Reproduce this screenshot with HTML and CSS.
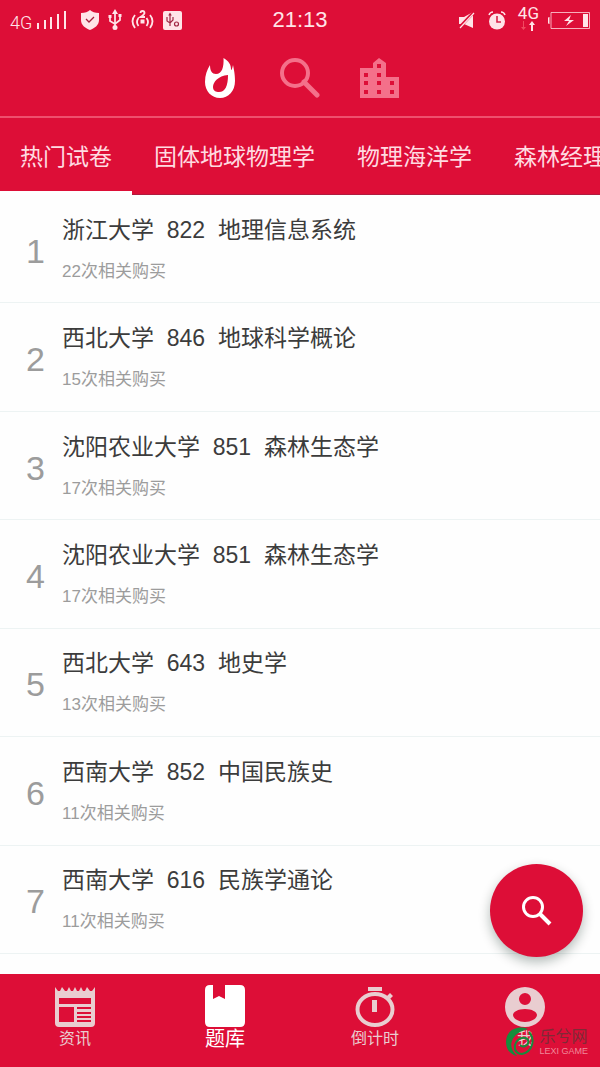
FILE: index.html
```
<!DOCTYPE html>
<html lang="zh-CN">
<head>
<meta charset="utf-8">
<meta name="viewport" content="width=device-width, initial-scale=1">
<title>题库</title>
<link rel="stylesheet" href="styles.css">
</head>
<body>
<div class="app">
  <header class="header">
    <div class="status">
      <div class="status-side">
        <span class="network">4G</span>
        <svg class="signal" width="32" height="20" viewBox="0 0 32 20" fill="currentColor"><path d="M1 13h2v6H1zM8 10h2v9H8zM14 7h2v12h-2zM21 4h2v15h-2zM28 1h2v18h-2z"/></svg>
        <svg class="shield" width="18" height="20" viewBox="0 0 18 20"><path fill="currentColor" d="M9 0c2 2 5 3 9 3v7c0 5-4 8-9 10-5-2-9-5-9-10V3c4 0 7-1 9-3z"/><path d="m5 9 3 3 5-5" fill="none" stroke="#a51d3c" stroke-width="1.3"/></svg>
        <svg class="usb" width="14" height="22" viewBox="0 0 14 22" fill="none" stroke="currentColor" stroke-width="1.7"><path d="M7 3v15M2 8v4l5 3 5-4V7"/><path fill="currentColor" stroke="none" d="m7 0 3 5H4zM.5 6h3v3h-3zM10.500 5h3v3h-3z"/><circle cx="7" cy="18.500" r="2.500" fill="currentColor" stroke="none"/></svg>
        <svg class="waves" width="23" height="20" viewBox="0 0 23 20" fill="none" stroke="currentColor" stroke-width="1.800"><path d="M4 5q-5 6 0 13M7.500 8q-3 4 0 8M19 5q5 6 0 13M15.500 8q3 4 0 8M9.500 3q0-2 2-2t2 2q0 1.500-4 4h4.500"/><path d="M9.500 9.500h4v4h-4z" fill="currentColor" stroke="none"/></svg>
        <svg class="debug" width="19" height="19" viewBox="0 0 19 19"><rect width="19" height="19" rx="2" fill="currentColor"/><g fill="none" stroke="#a02643" stroke-width="1.200"><path d="M7 3v12M4 6v4l3 2 3-3V6"/><circle cx="13.500" cy="13" r="2"/></g><path d="m7 1.500 1.800 3H5.200z" fill="#a02643"/></svg>
      </div>
      <time class="clock">21:13</time>
      <div class="status-side status-right">
        <svg class="mute" width="18" height="18" viewBox="0 0 18 18"><path fill="currentColor" d="M1 6h5l9-5v16l-9-4H1z"/><path d="M1 17 16 1" stroke="#dd0f38" stroke-width="3"/><path d="M2 17 16 2" stroke="currentColor" stroke-width="1.200"/></svg>
        <svg class="alarm" width="18" height="19" viewBox="0 0 18 19"><circle cx="9" cy="10.500" r="8" fill="currentColor"/><path d="M1 4q1-3 4-3M17 4q-1-3-4-3" fill="none" stroke="currentColor" stroke-width="1.500"/><path d="M9 5v6h4" fill="none" stroke="#d92148" stroke-width="1.600"/></svg>
        <span class="data"><span>4G</span><svg width="16" height="10" viewBox="0 0 16 10"><path d="M3 0h1v6h2L3.500 9 1 6h2z" fill="#f04a60"/><path d="M12 0 9 4h2v6h2V4h2z" fill="currentColor"/></svg></span>
        <svg class="battery" width="43" height="17" viewBox="0 0 43 17"><path d="M1 6q0-1 1.500-1v7Q1 12 1 11z" fill="currentColor"/><path d="M4 .500h38.500v16H4z" fill="none" stroke="currentColor" stroke-opacity=".75"/><path d="m24 3-7 6h5l-3 5 8-6h-5zM36 2h5v13h-5z" fill="currentColor"/></svg>
      </div>
    </div>
    <nav class="modes" aria-label="浏览方式">
      <button class="mode mode-active" aria-label="热门"><svg width="40" height="44" viewBox="0 0 40 44"><path fill="currentColor" fill-rule="evenodd" d="M23.500 2C29 5 31 9 31 13c0 2 1 1 2-4 1 5 2 9 2 16 0 10-6.500 17-15 17S5 35 5 26c0-7 2-12 5-17 0 6 2 9 6 9 6 0 8-7 7.500-16zM28 19c-10 1-15 7-15 12 0 4 3 5 6 5 6 0 9-6 9-17z"/></svg></button>
      <button class="mode" aria-label="搜索"><svg width="40" height="44" viewBox="0 0 40 44" fill="none" stroke="currentColor"><circle cx="15" cy="17" r="13" stroke-width="4"/><path d="m24 26 13 13" stroke-width="5" stroke-linecap="round"/></svg></button>
      <button class="mode" aria-label="院校"><svg width="40" height="44" viewBox="0 0 40 44"><path fill="currentColor" fill-rule="evenodd" d="M0 12h13V7l6-5 7 5v14h13v21H0zM4 17v4h4v-4zm0 8v4h4v-4zm0 9v4h4v-4zM17 8v4h4V8zm0 9v4h4v-4zm0 8v4h4v-4zm0 9v4h4v-4zm13-9v4h4v-4zm0 9v4h4v-4z"/></svg></button>
    </nav>
  </header>
  <nav class="tabs" aria-label="试卷分类">
    <button class="tab tab-active">热门试卷</button>
    <button class="tab">固体地球物理学</button>
    <button class="tab">物理海洋学</button>
    <button class="tab">森林经理学</button>
  </nav>
  <main class="content">
    <ol class="papers">
      <li class="paper"><span class="rank">1</span><div class="info"><h2 class="name">浙江大学  822  地理信息系统</h2><p class="sales">22次相关购买</p></div></li>
      <li class="paper"><span class="rank">2</span><div class="info"><h2 class="name">西北大学  846  地球科学概论</h2><p class="sales">15次相关购买</p></div></li>
      <li class="paper"><span class="rank">3</span><div class="info"><h2 class="name">沈阳农业大学  851  森林生态学</h2><p class="sales">17次相关购买</p></div></li>
      <li class="paper"><span class="rank">4</span><div class="info"><h2 class="name">沈阳农业大学  851  森林生态学</h2><p class="sales">17次相关购买</p></div></li>
      <li class="paper"><span class="rank">5</span><div class="info"><h2 class="name">西北大学  643  地史学</h2><p class="sales">13次相关购买</p></div></li>
      <li class="paper"><span class="rank">6</span><div class="info"><h2 class="name">西南大学  852  中国民族史</h2><p class="sales">11次相关购买</p></div></li>
      <li class="paper"><span class="rank">7</span><div class="info"><h2 class="name">西南大学  616  民族学通论</h2><p class="sales">11次相关购买</p></div></li>
    </ol>
    <button class="fab" aria-label="搜索试卷"><svg width="30" height="30" viewBox="0 0 30 30" fill="none" stroke="currentColor"><circle cx="11" cy="11" r="9.500" stroke-width="3"/><path d="m18 18 10 10" stroke-width="4"/></svg></button>
  </main>
  <nav class="bottom" aria-label="主导航">
    <button class="item"><svg width="40" height="40" viewBox="0 0 40 40"><path fill="currentColor" fill-rule="evenodd" d="M0 0 3 4h2l2-4 3 4h2l2-4 2 4h2l2-4 2 4h2l2-4 2 4h2l2-4 3 4h2l3-4v36q0 4-4 4H4q-4 0-4-4zM4 11v6h32v-6zm0 9v15h15V20zm18 0v2h14v-2zm0 5v2h14v-2zm0 4v2h14v-2zm0 4v2h14v-2z"/></svg><span>资讯</span></button>
    <button class="item item-active"><svg width="40" height="42" viewBox="0 0 40 42"><path fill="currentColor" d="M5 0h3v14l6-3 6 3V0h15q5 0 5 5v32q0 5-5 5H5q-5 0-5-5V5q0-5 5-5z"/></svg><span>题库</span></button>
    <button class="item"><svg width="40" height="40" viewBox="0 0 40 40"><path fill="currentColor" d="M13 0h14v4H13zM17 13h5v12h-5zM31 10l4-4 3 3-4 4z"/><ellipse cx="20" cy="22.500" rx="17.500" ry="15.500" fill="none" stroke="currentColor" stroke-width="4"/></svg><span>倒计时</span></button>
    <button class="item"><svg width="40" height="40" viewBox="0 0 40 40"><path fill="currentColor" fill-rule="evenodd" d="M20 0a20 20 0 1 1 0 40 20 20 0 0 1 0-40zm0 6a6 6 0 1 0 0 12 6 6 0 0 0 0-12zm0 16C13 22 8 25 8 28s5 7 12 7 12-4 12-7-5-6-12-6z"/></svg><span>我</span></button>
    <div class="brand">
      <svg width="30" height="30" viewBox="0 0 30 30" fill="none" stroke="#168c3c"><path fill="#168c3c" stroke="none" d="M23 2C14-2 1 2 1 15c0 8 5 13 11 14-5-5-7-10-5-15C9 8 15 4 23 2z"/><path d="M24 5c7 8 3 20-7 22-5 0-8-4-7-9 1-4 5-8 10-7 5 1 4 7 0 8-2 1-4 0-5-1" stroke-width="2"/></svg>
      <div class="brand-text"><span class="brand-name">乐兮网</span><span class="brand-sub">LEXI GAME</span></div>
    </div>
  </nav>
</div>
</body>
</html>
```
FILE: styles.css
```
:root {
  --red: #dd0e37;
  --text: #3c3c3c;
  --muted: #9c9c9c;
}

* { box-sizing: border-box; }

body {
  margin: 0;
  background: #fefefe;
  color: var(--text);
  font-family: "Liberation Sans", "Noto Sans CJK SC", sans-serif;
}

button {
  padding: 0;
  border: 0;
  background: none;
  color: inherit;
  font: inherit;
  cursor: pointer;
}

svg { display: block; flex: none; }

.app {
  display: flex;
  flex-direction: column;
  min-height: 100vh;
}

.header {
  flex: none;
  background: var(--red);
  color: #fff;
  border-bottom: 2px solid #ee506d;
}

.status {
  display: grid;
  grid-template-columns: 1fr auto 1fr;
  align-items: center;
  height: 40px;
  padding: 0 10px;
  color: #ffe4e8;
}

.status-side { display: flex; align-items: center; }
.status-right { justify-content: flex-end; gap: 12px; }
.network { font: 300 18px/24px Roboto, sans-serif; padding-top: 5px; }
.signal { margin: 0 13px 0 4px; }
.usb { margin: 0 9px; }
.waves { margin-right: 9px; }
.clock { font-size: 22px; line-height: 40px; }

.data {
  display: flex;
  flex-direction: column;
  align-items: center;
  font: 17px/16px Roboto, sans-serif;
  padding-bottom: 4px;
}

.battery { margin-left: -4px; }

.modes {
  display: flex;
  justify-content: center;
  gap: 40px;
  padding: 16px 0;
}

.mode { color: #f4708a; }
.mode-active { color: #fff; }

.tabs {
  display: flex;
  flex: none;
  gap: 2px;
  height: 77px;
  overflow: hidden;
  background: var(--red);
  color: #ffdbe1;
  box-shadow: inset 0 -1px #b01b3e;
}

.tab {
  flex: none;
  padding: 4px 20px 0;
  font-size: 23px;
  line-height: 68px;
  border-bottom: 4px solid transparent;
}

.tab-active { border-bottom-color: #fff; }

.content {
  position: relative;
  display: flex;
  flex: 1;
}

.papers {
  display: grid;
  flex: 1;
  grid-template-rows: repeat(7, 1fr);
  margin: 0;
  padding: 0 0 20px;
  list-style: none;
}

.paper {
  display: flex;
  align-items: center;
  border-bottom: 1px solid #edf3f3;
}

.rank {
  width: 62px;
  padding-left: 26px;
  padding-top: 4px;
  color: var(--muted);
  font-size: 34px;
  line-height: 40px;
}

.name {
  margin: 0;
  font-size: 23px;
  font-weight: 400;
  line-height: 34px;
  white-space: pre;
}

.sales {
  margin: 12px 0 0;
  color: var(--muted);
  font-size: 17px;
  line-height: 26px;
}

.fab {
  position: absolute;
  right: 17px;
  bottom: 17px;
  display: grid;
  place-items: center;
  width: 93px;
  height: 93px;
  border-radius: 50%;
  background: var(--red);
  color: #fff;
  box-shadow: 0 5px 12px rgba(0, 30, 20, 0.3);
}

.bottom {
  position: relative;
  display: grid;
  grid-template-columns: repeat(4, 1fr);
  flex: none;
  height: 93px;
  background: var(--red);
  color: #e9cdd0;
}

.item {
  display: flex;
  flex-direction: column;
  align-items: center;
  justify-content: flex-end;
  padding-bottom: 16px;
  font-size: 16px;
  line-height: 24px;
}

.item-active {
  color: #fff;
  font-size: 20px;
}

.brand {
  position: absolute;
  right: 12px;
  bottom: 10px;
  display: flex;
  align-items: center;
  gap: 4px;
}

.brand-text { display: flex; flex-direction: column; }

.brand-name {
  color: #7f2a36;
  font-size: 16px;
  line-height: 18px;
}

.brand-sub {
  color: #f0899a;
  font-size: 9px;
  line-height: 10px;
}
```
